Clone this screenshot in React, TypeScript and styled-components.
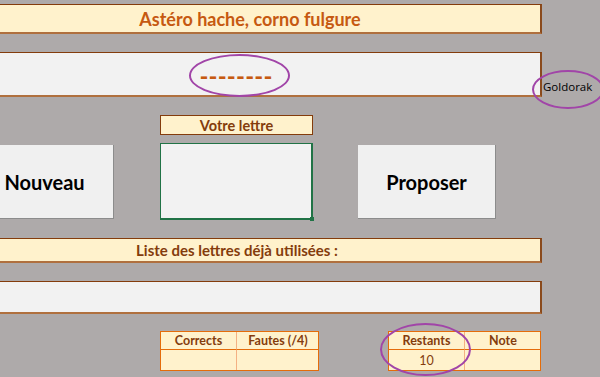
import React from "react";
import styled, { createGlobalStyle } from "styled-components";

const Global = createGlobalStyle`
  html, body { margin: 0; padding: 0; background: #aeaaaa; }
  body { font-family: Lato, "Open Sans", sans-serif; }
`;

const Page = styled.div`
  position: relative;
  width: 600px;
  height: 377px;
  overflow: hidden;
  background: #aeaaaa;
  display: flex;
  flex-direction: column;
`;

const Band = styled.div<{ $top: number; $left: number; $width: number; $height: number; $fill: string }>`
  margin-top: ${(p) => p.$top}px;
  margin-left: ${(p) => p.$left}px;
  width: ${(p) => p.$width}px;
  height: ${(p) => p.$height}px;
  box-sizing: border-box;
  background: ${(p) => p.$fill};
  border-top: 1px solid #843c0c;
  border-right: 2px solid #8a4a1c;
  border-bottom: 2px solid #b0703e;
  display: flex;
  align-items: center;
  justify-content: center;
  flex-shrink: 0;
`;

const TitleText = styled.span`
  font-weight: 700;
  font-size: 18px;
  color: #c65911;
`;

const Dashes = styled.span`
  font-weight: 700;
  font-size: 24px;
  letter-spacing: 0.2px;
  color: #c65911;
  margin-top: 3px;
`;

const LabelText = styled.span<{ $size: number }>`
  font-weight: 700;
  font-size: ${(p) => p.$size}px;
  color: #843c0c;
`;

const MidRow = styled.div`
  display: flex;
  align-items: flex-start;
  margin-top: 18px;
  margin-left: -24px;
  height: 106px;
  flex-shrink: 0;
`;

const Button = styled.div<{ $ml: number }>`
  margin-left: ${(p) => p.$ml}px;
  margin-top: 30px;
  width: 138px;
  height: 74px;
  box-sizing: border-box;
  background: #f0f0f0;
  border-right: 1px solid #8c8c8c;
  border-bottom: 1px solid #8c8c8c;
  display: flex;
  align-items: center;
  justify-content: center;
  font-weight: 700;
  font-size: 20px;
  color: #000;
`;

const LetterCol = styled.div`
  margin-left: 46px;
  width: 153px;
  display: flex;
  flex-direction: column;
  gap: 8px;
`;

const SmallLabel = styled.div`
  height: 20px;
  box-sizing: border-box;
  background: #fff2cc;
  border: 1px solid #843c0c;
  display: flex;
  align-items: center;
  justify-content: center;
`;

const InputCell = styled.div`
  position: relative;
  height: 77px;
  box-sizing: border-box;
  background: #f2f2f2;
  border: 2px solid #217346;
  border-top-width: 1px;
  border-left-width: 1px;
`;

const Handle = styled.div`
  position: absolute;
  right: -3px;
  bottom: -3px;
  width: 4px;
  height: 4px;
  background: #217346;
`;

const TablesRow = styled.div`
  display: flex;
  margin-top: 17px;
  margin-left: 160px;
  gap: 69px;
  flex-shrink: 0;
`;

const Table = styled.div<{ $cols: string }>`
  display: grid;
  grid-template-columns: ${(p) => p.$cols};
  grid-template-rows: 18px 20px;
  background: #fff2cc;
  border: 1px solid #e46c0a;
  box-sizing: border-box;
`;

const Cell = styled.div<{ $head?: boolean; $last?: boolean }>`
  display: flex;
  align-items: center;
  justify-content: center;
  font-size: 12.5px;
  font-weight: ${(p) => (p.$head ? 700 : 400)};
  color: #843c0c;
  border-right: ${(p) => (p.$last ? "none" : "1px solid #f4b183")};
  border-bottom: ${(p) => (p.$head ? "1px solid #e46c0a" : "none")};
  box-sizing: border-box;
`;

const Ellipse = styled.div<{ $x: number; $y: number; $w: number; $h: number }>`
  position: absolute;
  left: ${(p) => p.$x}px;
  top: ${(p) => p.$y}px;
  width: ${(p) => p.$w}px;
  height: ${(p) => p.$h}px;
  box-sizing: border-box;
  border: 2px solid #a145a8;
  border-radius: 50%;
`;

const Note = styled.span`
  position: absolute;
  left: 543px;
  top: 79px;
  font-family: "Open Sans", sans-serif;
  font-size: 11.5px;
  color: #000;
`;

export default function App() {
  return (
    <>
      <Global />
      <Page>
        <Band $top={4} $left={-40} $width={582} $height={30} $fill="#fff2cc">
          <TitleText>Astéro hache, corno fulgure</TitleText>
        </Band>
        <Band $top={18} $left={-68} $width={610} $height={45} $fill="#f2f2f2">
          <Dashes>--------</Dashes>
        </Band>
        <MidRow>
          <Button $ml={0}>Nouveau</Button>
          <LetterCol>
            <SmallLabel>
              <LabelText $size={14.5}>Votre lettre</LabelText>
            </SmallLabel>
            <InputCell>
              <Handle />
            </InputCell>
          </LetterCol>
          <Button $ml={45}>Proposer</Button>
        </MidRow>
        <Band $top={17} $left={-66} $width={608} $height={25} $fill="#fff2cc">
          <LabelText $size={15}>Liste des lettres déjà utilisées :</LabelText>
        </Band>
        <Band $top={18} $left={-10} $width={552} $height={33} $fill="#f2f2f2" />
        <TablesRow>
          <Table $cols="76px 82px" style={{ width: 159 }}>
            <Cell $head>Corrects</Cell>
            <Cell $head $last>Fautes (/4)</Cell>
            <Cell />
            <Cell $last />
          </Table>
          <Table $cols="76px 76px" style={{ width: 153 }}>
            <Cell $head>Restants</Cell>
            <Cell $head $last>Note</Cell>
            <Cell>10</Cell>
            <Cell $last />
          </Table>
        </TablesRow>
        <Note>Goldorak</Note>
        <Ellipse $x={189} $y={54} $w={101} $h={43} />
        <Ellipse $x={532} $y={70} $w={72} $h={39} />
        <Ellipse $x={380} $y={323} $w={91} $h={53} />
      </Page>
    </>
  );
}
